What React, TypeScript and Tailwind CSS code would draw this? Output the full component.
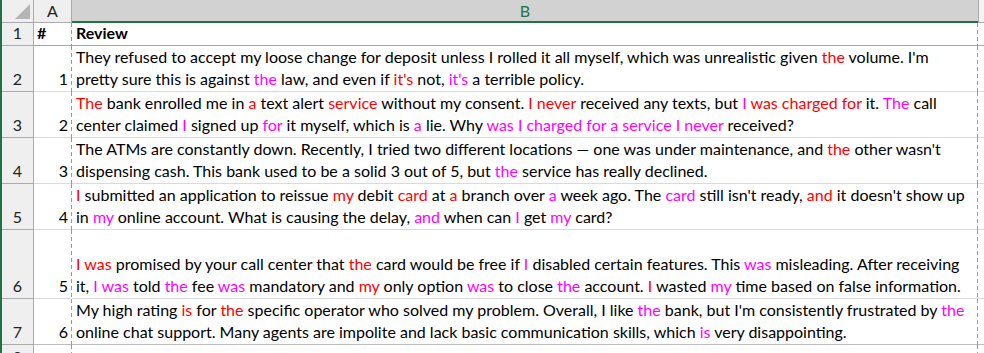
import React from 'react';

type Seg = [string, ('r' | 'm')?];

const RED = 'text-[#ff0000]';
const MAG = 'text-[#ff00ff]';

// each review is already split on the same line breaks as the sheet
const reviews: { n: number; h: string; lines: Seg[][] }[] = [
  {
    n: 1,
    h: 'h-[46px]',
    lines: [
      [
        ['They refused to accept my loose change for deposit unless I rolled it all myself, which was unrealistic given '],
        ['the', 'r'],
        [" volume. I'm"],
      ],
      [
        ['pretty sure this is against '],
        ['the', 'm'],
        [' law, and even if '],
        ["it's", 'r'],
        [' not, '],
        ["it's", 'm'],
        [' a terrible policy.'],
      ],
    ],
  },
  {
    n: 2,
    h: 'h-[46px]',
    lines: [
      [
        ['The', 'r'],
        [' bank enrolled me in '],
        ['a', 'r'],
        [' text alert '],
        ['service', 'r'],
        [' without my consent. '],
        ['I never', 'r'],
        [' received any texts, but '],
        ['I', 'm'],
        [' '],
        ['was charged for', 'r'],
        [' it. '],
        ['The', 'm'],
        [' call'],
      ],
      [
        ['center claimed '],
        ['I', 'm'],
        [' signed up '],
        ['for', 'm'],
        [' it myself, which is '],
        ['a', 'm'],
        [' lie. Why '],
        ['was I charged for a service I never', 'm'],
        [' received?'],
      ],
    ],
  },
  {
    n: 3,
    h: 'h-[46px]',
    lines: [
      [
        ['The ATMs are constantly down. Recently, I tried two different locations — one was under maintenance, and '],
        ['the', 'r'],
        [" other wasn't"],
      ],
      [
        ['dispensing cash. This bank used to be a solid 3 out of 5, but '],
        ['the', 'm'],
        [' service has really declined.'],
      ],
    ],
  },
  {
    n: 4,
    h: 'h-[46px]',
    lines: [
      [
        ['I', 'r'],
        [' submitted an application to reissue '],
        ['my', 'r'],
        [' debit '],
        ['card', 'r'],
        [' at '],
        ['a', 'r'],
        [' branch over '],
        ['a', 'm'],
        [' week ago. The '],
        ['card', 'm'],
        [" still isn't ready, "],
        ['and', 'r'],
        [" it doesn't show up"],
      ],
      [
        ['in '],
        ['my', 'm'],
        [' online account. What is causing the delay, '],
        ['and', 'm'],
        [' when can '],
        ['I', 'm'],
        [' get '],
        ['my', 'm'],
        [' card?'],
      ],
    ],
  },
  {
    n: 5,
    h: 'h-[69px]',
    lines: [
      [
        ['I was', 'r'],
        [' promised by your call center that '],
        ['the', 'r'],
        [' card would be free if '],
        ['I', 'm'],
        [' disabled certain features. This '],
        ['was', 'm'],
        [' misleading. After receiving'],
      ],
      [
        ['it, '],
        ['I was', 'm'],
        [' told '],
        ['the', 'm'],
        [' fee '],
        ['was', 'm'],
        [' mandatory and '],
        ['my', 'r'],
        [' only option '],
        ['was', 'm'],
        [' to close '],
        ['the', 'm'],
        [' account. '],
        ['I', 'r'],
        [' wasted '],
        ['my', 'm'],
        [' time based on false information.'],
      ],
    ],
  },
  {
    n: 6,
    h: 'h-[46px]',
    lines: [
      [
        ['My high rating '],
        ['is', 'r'],
        [' for '],
        ['the', 'r'],
        [' specific operator who solved my problem. Overall, I like '],
        ['the', 'm'],
        [" bank, but I'm consistently frustrated by "],
        ['the', 'm'],
      ],
      [
        ['online chat support. Many agents are impolite and lack basic communication skills, which '],
        ['is', 'm'],
        [' very disappointing.'],
      ],
    ],
  },
];

function Line({ segs }: { segs: Seg[] }) {
  return (
    <div className="whitespace-pre leading-[22px]">
      {segs.map(([t, c], i) =>
        c ? (
          <span key={i} className={c === 'r' ? RED : MAG}>
            {t}
          </span>
        ) : (
          <span key={i}>{t}</span>
        )
      )}
    </div>
  );
}

// page-break line between columns
function Dash() {
  return (
    <div className="w-px shrink-0 bg-[repeating-linear-gradient(to_bottom,#9a9a9a_0px,#9a9a9a_4px,transparent_4px,transparent_7px)]" />
  );
}

export default function App() {
  return (
    <div
      className="w-[984px] h-[353px] overflow-hidden bg-white text-[16px] text-black border-l-2 border-[#217346]"
      style={{ fontFamily: 'Lato, "Liberation Sans", sans-serif' }}
    >
      {/* column headers */}
      <div className="flex h-[23px]">
        <div className="w-[32px] shrink-0 bg-[#efefef] border-b border-r border-[#ababab] flex items-end justify-end pr-[3px] pb-[3px]">
          <svg width="15" height="15" viewBox="0 0 15 15">
            <polygon points="15,0 15,15 0,15" fill="#b5b5b5" />
          </svg>
        </div>
        <div className="w-[38px] shrink-0 bg-[#efefef] border-b border-r border-[#ababab] flex items-center justify-center text-[#222]">
          A
        </div>
        <div className="w-[906px] shrink-0 bg-[#d2d2d2] border-b-2 border-[#217346] flex items-center justify-center text-[#217346]">
          B
        </div>
        <div className="flex-1 bg-[#f3f3f3] border-l border-b border-[#ababab]" />
      </div>

      {/* row 1: table header */}
      <div className="flex h-[23px]">
        <div className="w-[32px] shrink-0 bg-[#efefef] border-b border-r border-[#ababab] flex items-end justify-center pb-[1px] leading-[22px] text-[#222]">
          1
        </div>
        <div className="w-[37px] shrink-0 border-b border-[#a6a6a6] flex items-end pl-[3px] pb-[1px] font-bold leading-[22px]">
          #
        </div>
        <Dash />
        <div className="w-[905px] shrink-0 border-b border-[#a6a6a6] flex items-end pl-[4px] pb-[1px] font-bold leading-[22px]">
          Review
        </div>
        <Dash />
        <div className="flex-1 border-b border-[#a6a6a6]" />
      </div>

      {reviews.map((r, i) => {
        const line = r.n === 6 ? 'border-[#bdbdbd]' : 'border-[#dadada]';
        return (
          <div key={r.n} className={`flex ${r.h}`}>
            <div className="w-[32px] shrink-0 bg-[#efefef] border-b border-r border-[#ababab] flex items-end justify-center pb-[1px] leading-[22px] text-[#222]">
              {i + 2}
            </div>
            <div className={`w-[37px] shrink-0 border-b ${line} flex items-end justify-end pr-[3px] pb-[1px] leading-[22px]`}>
              {r.n}
            </div>
            <Dash />
            <div className={`w-[905px] shrink-0 border-b ${line} flex flex-col justify-end pl-[4px] pb-[1px] overflow-hidden`}>
              {r.lines.map((l, j) => (
                <Line key={j} segs={l} />
              ))}
            </div>
            <Dash />
            <div className={`flex-1 border-b ${line}`} />
          </div>
        );
      })}

      {/* row 8, cut off at the window edge */}
      <div className="flex h-[23px]">
        <div className="w-[32px] shrink-0 bg-[#efefef] border-r border-[#ababab] flex items-start justify-center pt-[1px] leading-[22px] text-[#222]">
          8
        </div>
        <div className="w-[37px] shrink-0" />
        <Dash />
        <div className="w-[905px] shrink-0" />
        <Dash />
        <div className="flex-1" />
      </div>
    </div>
  );
}
